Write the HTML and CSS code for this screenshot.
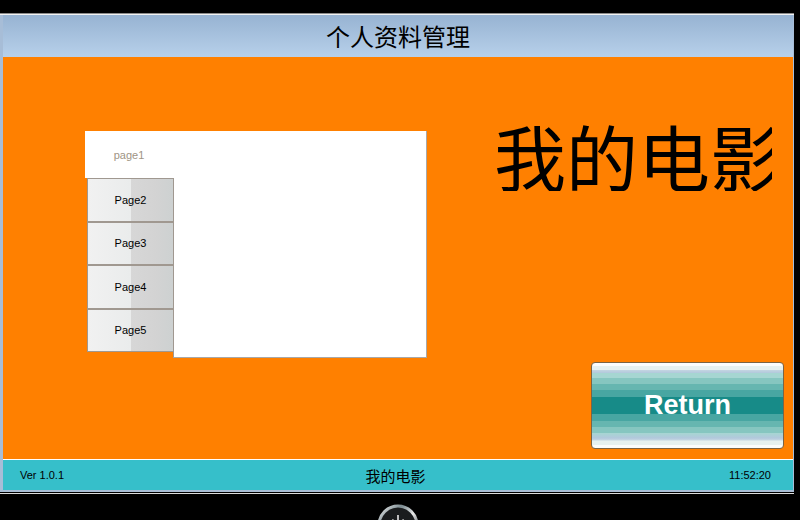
FILE: index.html
```html
<!DOCTYPE html>
<html lang="zh">
<head>
<meta charset="utf-8">
<title>个人资料管理</title>
<link rel="stylesheet" href="styles.css">
</head>
<body>
<div class="device">
  <div class="topline"></div>
  <div class="screen">
    <div class="titlebar">个人资料管理</div>
    <div class="main">
      <div class="tw">
        <div class="tw-head"><div class="tw-sel">page1</div></div>
        <div class="tw-body">
          <div class="tw-list">
            <div class="tab">Page2</div>
            <div class="tab">Page3</div>
            <div class="tab">Page4</div>
            <div class="tab">Page5</div>
          </div>
          <div class="tw-panel"></div>
        </div>
      </div>
      <div class="right">
        <div class="big">我的电影</div>
        <div class="return">Return</div>
      </div>
    </div>
    <div class="footer">
      <span class="ver">Ver 1.0.1</span>
      <span class="fname">我的电影</span>
      <span class="clock">11:52:20</span>
    </div>
  </div>
  <div class="bottomline"></div>
  <div class="bezel">
    <svg class="power" width="44" height="44" viewBox="0 0 44 44">
      <defs>
        <linearGradient id="ring" x1="0" y1="0" x2="1" y2="1">
          <stop offset="0" stop-color="#f4f4f4"/>
          <stop offset="0.3" stop-color="#7a8a90"/>
          <stop offset="0.55" stop-color="#e8e8e8"/>
          <stop offset="0.8" stop-color="#5a6066"/>
          <stop offset="1" stop-color="#d0d0d0"/>
        </linearGradient>
      </defs>
      <circle cx="22" cy="22" r="19" fill="#1a1c1e" stroke="url(#ring)" stroke-width="3"/>
      <path d="M17.5 16.5 A7 7 0 1 0 26.5 16.5" fill="none" stroke="#e8e8e8" stroke-width="1.6"/>
      <line x1="22" y1="12" x2="22" y2="20" stroke="#e8e8e8" stroke-width="1.6"/>
    </svg>
  </div>
</div>
</body>
</html>
```
FILE: styles.css
```css
html, body {
  margin: 0;
  padding: 0;
}
body {
  background: #000;
  width: 800px;
  height: 520px;
  overflow: hidden;
  font-family: "Liberation Sans", Arial, "Noto Sans CJK SC", sans-serif;
}
.device {
  padding-top: 13px;
  width: 794px;
}
.topline {
  height: 1px;
  border-top: 1px solid #8c8c8c;
  background: #f2f2f2;
}
.screen {
  display: flex;
  flex-direction: column;
  border-left: 3px solid #a7bdd7;
  border-right: 1px solid #a7bdd7;
  border-bottom: 2px solid #a9bdd5;
}
.titlebar {
  height: 42px;
  background: linear-gradient(#97b3d2, #b7d0ea);
  display: flex;
  align-items: center;
  justify-content: center;
  font-family: "Noto Sans CJK SC", sans-serif;
  font-size: 24px;
  color: #000;
  line-height: 1;
}
.main {
  height: 402px;
  background: #ff8000;
  display: flex;
  padding: 0 9px 10px 82px;
  box-sizing: border-box;
}
.tw {
  width: 342px;
  margin-top: 74px;
  display: flex;
  flex-direction: column;
  align-self: flex-start;
}
.tw-head {
  height: 47px;
  background: #fff;
  border-right: 1px solid #a8a8a8;
  display: flex;
}
.tw-sel {
  width: 88px;
  display: flex;
  align-items: center;
  justify-content: center;
  font-size: 11px;
  color: #a09484;
}
.tw-body {
  display: flex;
  height: 180px;
}
.tw-list {
  width: 88px;
  padding-left: 2px;
  box-sizing: border-box;
  display: flex;
  flex-direction: column;
}
.tab {
  height: 43.5px;
  box-sizing: border-box;
  border: 1px solid #a09890;
  border-right: none;
  background: linear-gradient(to right, #f1f1f1 0%, #eaecec 50%, #d7d7d7 50%, #d3d3d3 80%, #cdd1d1 100%);
  display: flex;
  align-items: center;
  justify-content: center;
  font-size: 11px;
  color: #000;
}
.tw-panel {
  flex: 1;
  background: #fff;
  border-left: 1px solid #a09890;
  border-right: 1px solid #a8a8a8;
  border-bottom: 1px solid #a8a8a8;
}
.right {
  flex: 1;
  margin-left: 67px;
  display: flex;
  flex-direction: column;
}
.big {
  margin-top: 62px;
  width: 278px;
  overflow: hidden;
  white-space: nowrap;
  font-family: "Noto Sans CJK SC", sans-serif;
  font-size: 72px;
  line-height: 72px;
  color: #000;
}
.return {
  margin-top: auto;
  align-self: flex-end;
  width: 193px;
  height: 87px;
  box-sizing: border-box;
  border: 1px solid #7a6446;
  border-radius: 4px;
  background: linear-gradient(#fbfdfd 0px, #fbfdfd 3px, #e6f1f0 3px, #e6f1f0 7px, #c4d6e2 7px, #b2c8dc 10px, #a6d6d2 10px, #a6d6d2 15px, #86c6c0 15px, #86c6c0 21px, #66b6b0 21px, #66b6b0 27px, #48a6a2 27px, #48a6a2 34px, #178b88 34px, #178b88 51px, #48a6a2 51px, #48a6a2 58px, #66b6b0 58px, #66b6b0 64px, #86c6c0 64px, #86c6c0 70px, #a6d6d2 70px, #b2c8dc 75px, #c4d6e2 77px, #e6f1f0 78px, #e6f1f0 82px, #fbfdfd 82px);
  display: flex;
  align-items: center;
  justify-content: center;
  color: #fff;
  font-weight: bold;
  font-size: 27px;
}
.footer {
  height: 30px;
  border-top: 1px solid #fff;
  background: #36bfca;
  display: grid;
  grid-template-columns: 1fr auto 1fr;
  align-items: center;
  padding: 0 22px 0 17px;
}
.ver, .clock {
  font-size: 11px;
  color: #000;
}
.clock {
  justify-self: end;
}
.fname {
  font-family: "Noto Sans CJK SC", sans-serif;
  font-size: 15px;
  color: #000;
}
.bottomline {
  margin-top: 1px;
  height: 1px;
  background: #dcdcdc;
}
.bezel {
  display: flex;
  justify-content: center;
  padding-left: 2px;
  margin-top: 9px;
  height: 17px;
  overflow: hidden;
}
.power {
  display: block;
  flex: none;
}
```
